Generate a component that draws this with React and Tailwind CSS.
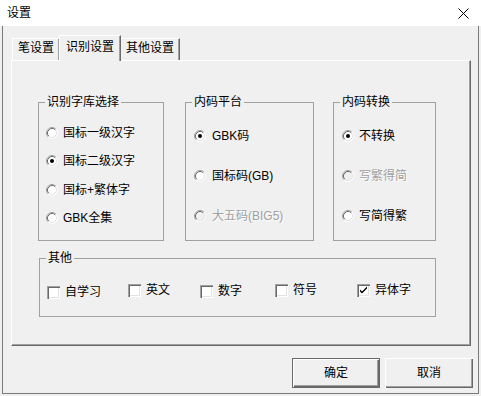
import React from "react";

function Radio({ checked, disabled }) {
  return (
    <svg width="12" height="12" viewBox="0 0 12 12" className="shrink-0">
      <circle cx="6" cy="6" r="5" fill={disabled ? "#f0f0f0" : "#ffffff"} />
      <path d="M2.11 9.89 A5.5 5.5 0 0 1 9.89 2.11" stroke="#a0a0a0" fill="none" />
      <path d="M9.89 2.11 A5.5 5.5 0 0 1 2.11 9.89" stroke="#ffffff" fill="none" />
      <path d="M2.82 9.18 A4.5 4.5 0 0 1 9.18 2.82" stroke="#696969" fill="none" />
      <path d="M9.18 2.82 A4.5 4.5 0 0 1 2.82 9.18" stroke="#e3e3e3" fill="none" />
      {checked && <circle cx="6" cy="6" r="2" fill="#000000" />}
    </svg>
  );
}

function Check({ checked }) {
  return (
    <div className="w-[13px] h-[13px] shrink-0 bg-white shadow-[inset_1px_1px_0_#a0a0a0,inset_2px_2px_0_#696969,inset_-1px_-1px_0_#ffffff,inset_-2px_-2px_0_#e3e3e3]">
      {checked && (
        <svg width="13" height="13" viewBox="0 0 13 13">
          <path d="M3 5.5 L3 7.5 L5 9.5 L10 4.5 L10 2.5 L5 7.5 Z" fill="#000000" />
        </svg>
      )}
    </div>
  );
}

function RadioRow({ label, checked, disabled, gap, className }) {
  return (
    <div className={"flex items-center h-[14px] " + (className || "")}>
      <Radio checked={checked} disabled={disabled} />
      <span
        className={
          "leading-[14px] whitespace-nowrap " +
          gap +
          (disabled ? " text-[#a0a0a0] [text-shadow:1px_1px_0_#ffffff]" : " text-black")
        }
      >
        {label}
      </span>
    </div>
  );
}

function CheckItem({ label, checked, className }) {
  return (
    <div className={"flex items-center " + (className || "")}>
      <Check checked={checked} />
      <span className="ml-[5px] leading-[14px] whitespace-nowrap">{label}</span>
    </div>
  );
}

export default function App() {
  return (
    <div className="w-[481px] h-[396px] bg-[#f0f0f0] text-[12px] text-black font-['Liberation_Sans','Noto_Sans_CJK_SC',sans-serif] overflow-hidden">
      {/* Title bar */}
      <div className="h-[26px] bg-white flex items-center justify-between pl-[7px] pr-[12px]">
        <span className="leading-[14px]">设置</span>
        <svg width="11" height="11" viewBox="0 0 11 11">
          <path d="M0.5 0.5 L10.5 10.5 M10.5 0.5 L0.5 10.5" stroke="#000000" strokeWidth="1" />
        </svg>
      </div>

      {/* Body */}
      <div className="ml-[2px] w-[477px] h-[368px] border-l border-r border-b border-[#7a7a7a] flex flex-col">
        {/* Tabs */}
        <div className="mt-[9px] ml-[8px] pl-[1px] h-[25px] flex items-end">
          <div className="w-[47px] h-[22px] border-t border-l border-white shadow-[inset_-1px_0_0_#a0a0a0] flex justify-center pt-[2px] leading-[14px]">
            笔设置
          </div>
          <div className="relative z-10 w-[62px] h-[26px] -mb-[1px] bg-[#f0f0f0] border-t border-l border-white border-r border-r-[#696969] shadow-[inset_-1px_0_0_#a0a0a0] flex justify-center pt-[4px] leading-[14px]">
            识别设置
          </div>
          <div className="w-[59px] h-[22px] border-t border-white border-r border-r-[#696969] shadow-[inset_-1px_0_0_#a0a0a0] flex justify-center pt-[2px] leading-[14px]">
            其他设置
          </div>
        </div>

        {/* Panel */}
        <div className="ml-[8px] w-[460px] h-[286px] border-t border-l border-white border-r border-b border-r-[#696969] border-b-[#696969] shadow-[inset_-1px_-1px_0_#a0a0a0] flex flex-col pt-[34px] pl-[26px]">
          <div className="flex items-start">
            <fieldset className="w-[126px] h-[146px] border border-[#a0a0a0] flex flex-col">
              <legend className="ml-[6px] px-[2px] leading-[14px]">识别字库选择</legend>
              <div className="flex flex-col pl-[7px] pt-[17px]">
                <RadioRow label="国标一级汉字" gap="ml-[5px]" />
                <RadioRow label="国标二级汉字" gap="ml-[5px]" checked className="mt-[14px]" />
                <RadioRow label="国标+繁体字" gap="ml-[5px]" className="mt-[15px]" />
                <RadioRow label="GBK全集" gap="ml-[5px]" className="mt-[14px]" />
              </div>
            </fieldset>
            <fieldset className="ml-[21px] w-[129px] h-[146px] border border-[#a0a0a0] flex flex-col">
              <legend className="ml-[6px] px-[2px] leading-[14px]">内码平台</legend>
              <div className="flex flex-col pl-[8px] pt-[20px]">
                <RadioRow label="GBK码" gap="ml-[6px]" checked />
                <RadioRow label="国标码(GB)" gap="ml-[6px]" className="mt-[26px]" />
                <RadioRow label="大五码(BIG5)" gap="ml-[6px]" disabled className="mt-[26px]" />
              </div>
            </fieldset>
            <fieldset className="ml-[19px] w-[103px] h-[146px] border border-[#a0a0a0] flex flex-col">
              <legend className="ml-[6px] px-[2px] leading-[14px]">内码转换</legend>
              <div className="flex flex-col pl-[8px] pt-[20px]">
                <RadioRow label="不转换" gap="ml-[5px]" checked />
                <RadioRow label="写繁得简" gap="ml-[5px]" disabled className="mt-[26px]" />
                <RadioRow label="写简得繁" gap="ml-[5px]" className="mt-[26px]" />
              </div>
            </fieldset>
          </div>

          <fieldset className="mt-[10px] ml-[1px] w-[397px] h-[66px] border border-[#a0a0a0] flex flex-col">
            <legend className="ml-[6px] px-[2px] leading-[14px]">其他</legend>
            <div className="flex items-start pl-[7px] pt-[18px]">
              <CheckItem label="自学习" className="w-[81px] mt-[2px]" />
              <CheckItem label="英文" className="w-[72px]" />
              <CheckItem label="数字" className="w-[75px] mt-[1px]" />
              <CheckItem label="符号" className="w-[82px]" />
              <CheckItem label="异体字" checked />
            </div>
          </fieldset>
        </div>

        {/* Buttons */}
        <div className="mt-[12px] flex justify-end gap-[5px] pr-[5px]">
          <button className="w-[88px] h-[30px] bg-[#f0f0f0] border border-[#696969] shadow-[inset_1px_1px_0_#ffffff,inset_-1px_-1px_0_#696969,inset_-2px_-2px_0_#a0a0a0] leading-[14px]">
            确定
          </button>
          <button className="w-[88px] h-[30px] bg-[#f0f0f0] shadow-[inset_1px_1px_0_#ffffff,inset_-1px_-1px_0_#696969,inset_-2px_-2px_0_#a0a0a0] leading-[14px]">
            取消
          </button>
        </div>
      </div>
    </div>
  );
}
